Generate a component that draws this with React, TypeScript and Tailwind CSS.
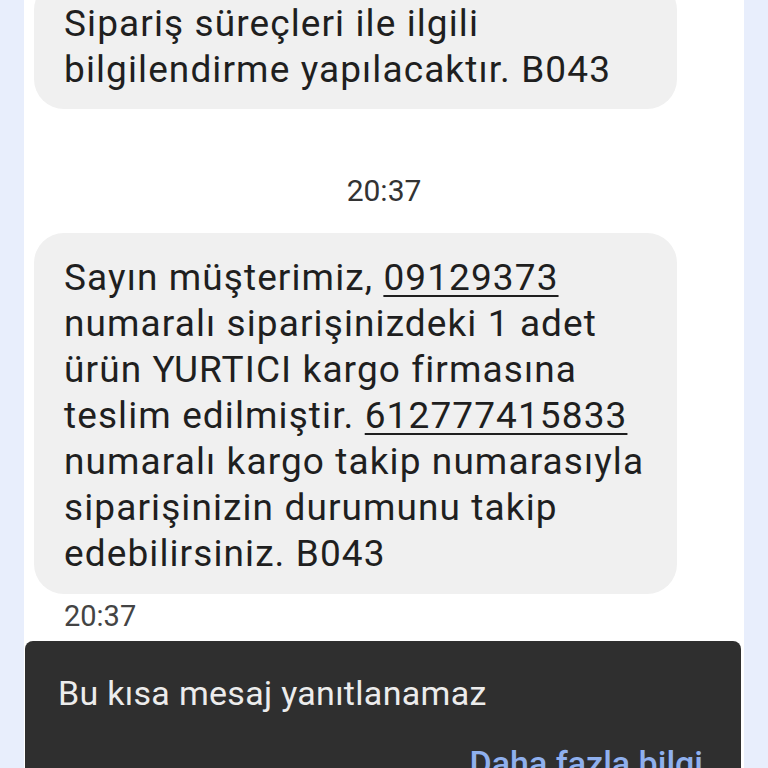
import React from "react";

const font = { fontFamily: "Roboto, 'Noto Sans', sans-serif" };

export default function App() {
  return (
    <div
      className="flex h-[768px] w-[768px] overflow-hidden bg-[#e8eefc]"
      style={font}
    >
      <div className="w-[24px] shrink-0 bg-[#e8eefc]" />
      <div className="flex flex-1 flex-col bg-white">
        <div className="ml-[10px] mr-[67px] mt-[-20px] rounded-[30px] bg-[#f0f0f0] pb-[16px] pl-[30px] pr-[20px] pt-[21px] text-[37px] leading-[46px] tracking-[1.1px] text-[#1f1f1f]">
          <div>Sipariş süreçleri ile ilgili</div>
          <div>bilgilendirme yapılacaktır. B043</div>
        </div>
        <div className="mt-[62px] text-center text-[30px] leading-[40px] text-[#333]">
          20:37
        </div>
        <div className="ml-[10px] mr-[67px] mt-[22px] rounded-[30px] bg-[#f0f0f0] pb-[17px] pl-[30px] pr-[20px] pt-[22px] text-[37px] leading-[46px] tracking-[1.1px] text-[#1f1f1f]">
          <div>
            Sayın müşterimiz,{" "}
            <span className="underline decoration-[2px] underline-offset-[5px]">09129373</span>
          </div>
          <div>numaralı siparişinizdeki 1 adet</div>
          <div>ürün YURTICI kargo firmasına</div>
          <div>
            teslim edilmiştir.{" "}
            <span className="underline decoration-[2px] underline-offset-[5px]">612777415833</span>
          </div>
          <div>numaralı kargo takip numarasıyla</div>
          <div>siparişinizin durumunu takip</div>
          <div>edebilirsiniz. B043</div>
        </div>
        <div className="ml-[40px] mt-[2px] text-[29px] leading-[40px] text-[#444]">
          20:37
        </div>
        <div className="ml-[1px] mr-[3px] mt-[5px] flex-1 rounded-t-[8px] bg-[#2f2f2f] px-[33px] pt-[32px]">
          <div className="text-[34px] leading-[40px] tracking-[0.3px] text-[#ececec]">
            Bu kısa mesaj yanıtlanamaz
          </div>
          <div className="mt-[30px] pr-[5px] text-right text-[34px] font-medium leading-[40px] text-[#8fb0ee]">
            Daha fazla bilgi
          </div>
        </div>
      </div>
      <div className="w-[24px] shrink-0 bg-[#e8eefc]" />
    </div>
  );
}
